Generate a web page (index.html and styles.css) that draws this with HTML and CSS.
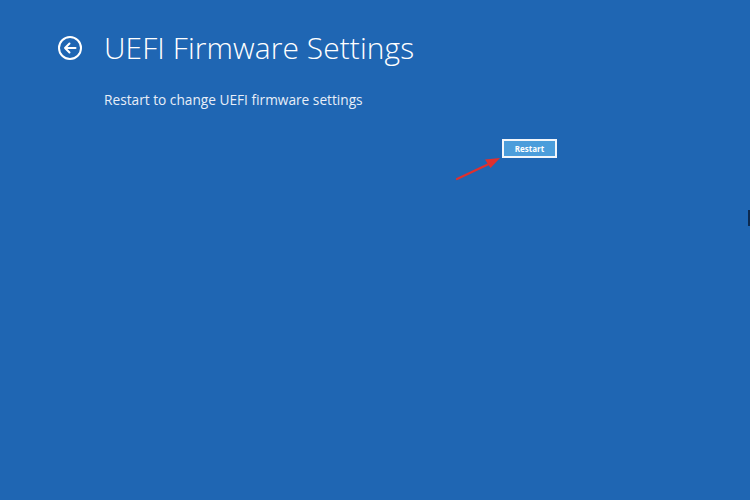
FILE: index.html
```html
<!DOCTYPE html>
<html>
<head>
<meta charset="utf-8">
<link rel="stylesheet" href="styles.css">
</head>
<body>
<div class="screen">
  <header class="title-row">
    <svg class="back" width="26" height="26" viewBox="0 0 26 26">
      <circle cx="13" cy="13" r="11" fill="none" stroke="#fff" stroke-width="2"/>
      <path d="M18.5 13H8M12.5 8.5L8 13l4.5 4.5" fill="none" stroke="#fff" stroke-width="2" stroke-linecap="round" stroke-linejoin="round"/>
    </svg>
    <h1 class="title">UEFI Firmware Settings</h1>
  </header>
  <p class="subtitle">Restart to change UEFI firmware settings</p>
  <div class="action">
    <button class="restart">Restart</button>
  </div>
  <svg class="pointer" width="60" height="40" viewBox="0 0 60 40">
    <path d="M2 36L36 20" stroke="#e0302e" stroke-width="2.2" stroke-linecap="round"/>
    <path d="M45 15L30 16.5L35.5 25Z" fill="#e0302e"/>
  </svg>
  <div class="edge-mark"></div>
</div>
</body>
</html>
```
FILE: styles.css
```css
html, body {
  margin: 0;
  padding: 0;
}
body {
  width: 750px;
  height: 500px;
  overflow: hidden;
  background: #1f66b3;
  font-family: "Open Sans", "Noto Sans", sans-serif;
  color: #fff;
}
.screen {
  position: relative;
  width: 750px;
  height: 500px;
  padding: 29px 0 0 57px;
  box-sizing: border-box;
}
.title-row {
  display: flex;
  align-items: center;
  gap: 21px;
  height: 38px;
}
.back {
  display: block;
}
.title {
  margin: 0;
  font-weight: 300;
  font-size: 29.9px;
  letter-spacing: 0.1px;
  line-height: 38px;
  color: #fff;
}
.subtitle {
  margin: 24px 0 0 47px;
  font-size: 13.7px;
  line-height: 18px;
  color: #e8eef8;
}
.action {
  display: flex;
  justify-content: flex-start;
  margin: 30px 0 0 445px;
}
.restart {
  width: 55px;
  height: 19px;
  padding: 0;
  border: 2px solid #f2f6fb;
  background: #4b9ddb;
  color: #fff;
  font-family: "Open Sans", sans-serif;
  font-size: 8px;
  font-weight: 700;
  line-height: 15px;
}
.pointer {
  position: absolute;
  left: 455px;
  top: 143px;
}
.edge-mark {
  position: absolute;
  left: 748px;
  top: 210px;
  width: 2px;
  height: 16px;
  background: #0d2a4f;
}
```
